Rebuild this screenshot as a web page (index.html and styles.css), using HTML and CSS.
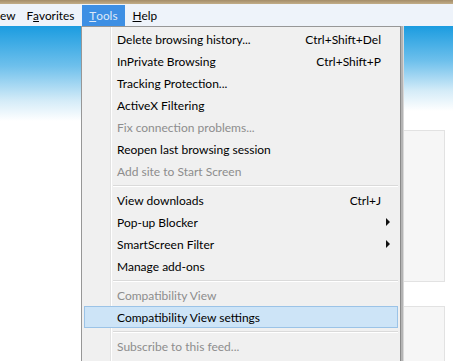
FILE: index.html
```html
<!DOCTYPE html>
<html>
<head>
    <meta charset="UTF-8">
    <title>Tools menu</title>
    <link rel="stylesheet" href="styles.css">
</head>
<body>
    <div class="frame"></div>
    <div class="menubar">
        <span class="mb-item first">ew</span>
        <span class="mb-item">F<u>a</u>vorites</span>
        <span class="mb-item active"><u>T</u>ools</span>
        <span class="mb-item"><u>H</u>elp</span>
    </div>
    <div class="page">
        <div class="side left"></div>
        <div class="menu">
            <div class="item"><span>Delete browsing history...</span><span class="key">Ctrl+Shift+Del</span></div>
            <div class="item"><span>InPrivate Browsing</span><span class="key">Ctrl+Shift+P</span></div>
            <div class="item"><span>Tracking Protection...</span></div>
            <div class="item"><span>ActiveX Filtering</span></div>
            <div class="item off"><span>Fix connection problems...</span></div>
            <div class="item"><span>Reopen last browsing session</span></div>
            <div class="item off"><span>Add site to Start Screen</span></div>
            <div class="sep"></div>
            <div class="item"><span>View downloads</span><span class="key">Ctrl+J</span></div>
            <div class="item"><span>Pop-up Blocker</span><span class="arrow"></span></div>
            <div class="item"><span>SmartScreen Filter</span><span class="arrow"></span></div>
            <div class="item"><span>Manage add-ons</span></div>
            <div class="sep"></div>
            <div class="item off"><span>Compatibility View</span></div>
            <div class="item hover"><span>Compatibility View settings</span></div>
            <div class="sep"></div>
            <div class="item off"><span>Subscribe to this feed...</span></div>
        </div>
        <div class="side right">
            <div class="card first"></div>
            <div class="card"></div>
        </div>
    </div>
</body>
</html>
```
FILE: styles.css
```css
body {
    margin: 0;
    width: 453px;
    height: 361px;
    overflow: hidden;
    background: #fff;
    font-family: 'Lato', sans-serif;
    font-size: 12px;
    color: #000;
}
.frame {
    height: 4px;
    background: linear-gradient(#a48c68, #c2ad88);
}
.menubar {
    height: 22px;
    background: #eef3fa;
    display: flex;
    align-items: stretch;
    font-size: 11.8px;
}
.mb-item {
    display: flex;
    align-items: center;
    padding: 0 8px;
    margin-top: 1px;
}
.mb-item.first {
    padding: 0 3px 0 0;
}
.mb-item.active {
    background: #3d8fe4;
    color: #dde9f8;
    padding: 0 7px;
}
.page {
    display: flex;
    height: 335px;
}
.side {
    background: linear-gradient(#1b9ce0 0px, #6ec0ec 40px, #d5ecf8 75px, #fff 95px);
}
.side.left {
    width: 81px;
}
.side.right {
    flex: 1;
    padding: 104px 8px 0 0;
    background: linear-gradient(#1b9ce0 0px, #6ec0ec 35px, #d5ecf8 65px, #fff 85px);
}
.card {
    height: 150px;
    border: 1px solid #e2e2e2;
    border-left: none;
    background: #f6f6f6;
}
.card.first {
    margin-bottom: 24px;
}
.menu {
    width: 314px;
    background: #f0f0f0;
    border: 1px solid #979797;
    border-bottom: none;
    border-right-color: #8a8a8a;
    box-shadow: 2px 0 0 #b4b4b4, 3px 0 0 #d8d8d8;
    margin-right: 3px;
    padding: 1px 2px 0 2px;
    background-image: linear-gradient(to right, transparent 28px, #e2e2e2 28px, #e2e2e2 29px, #fff 29px, #fff 30px, transparent 30px);
}
.item {
    height: 22px;
    display: flex;
    align-items: center;
    padding-left: 32px;
    padding-right: 16px;
    box-sizing: border-box;
    border: 1px solid transparent;
}
.item span:first-child {
    flex: 1;
}
.item.off {
    color: #8d8d8d;
}
.item.hover {
    background: #cde4f7;
    border-color: #9bc3e7;
}
.key {
    text-align: right;
}
.arrow {
    width: 0;
    height: 0;
    border-top: 4px solid transparent;
    border-bottom: 4px solid transparent;
    border-left: 4px solid #111;
    margin-right: -9px;
}
.sep {
    height: 7px;
    margin-left: 29px;
    background: linear-gradient(transparent 3px, #dadada 3px, #dadada 4px, #fff 4px, #fff 5px, transparent 5px);
}
```
